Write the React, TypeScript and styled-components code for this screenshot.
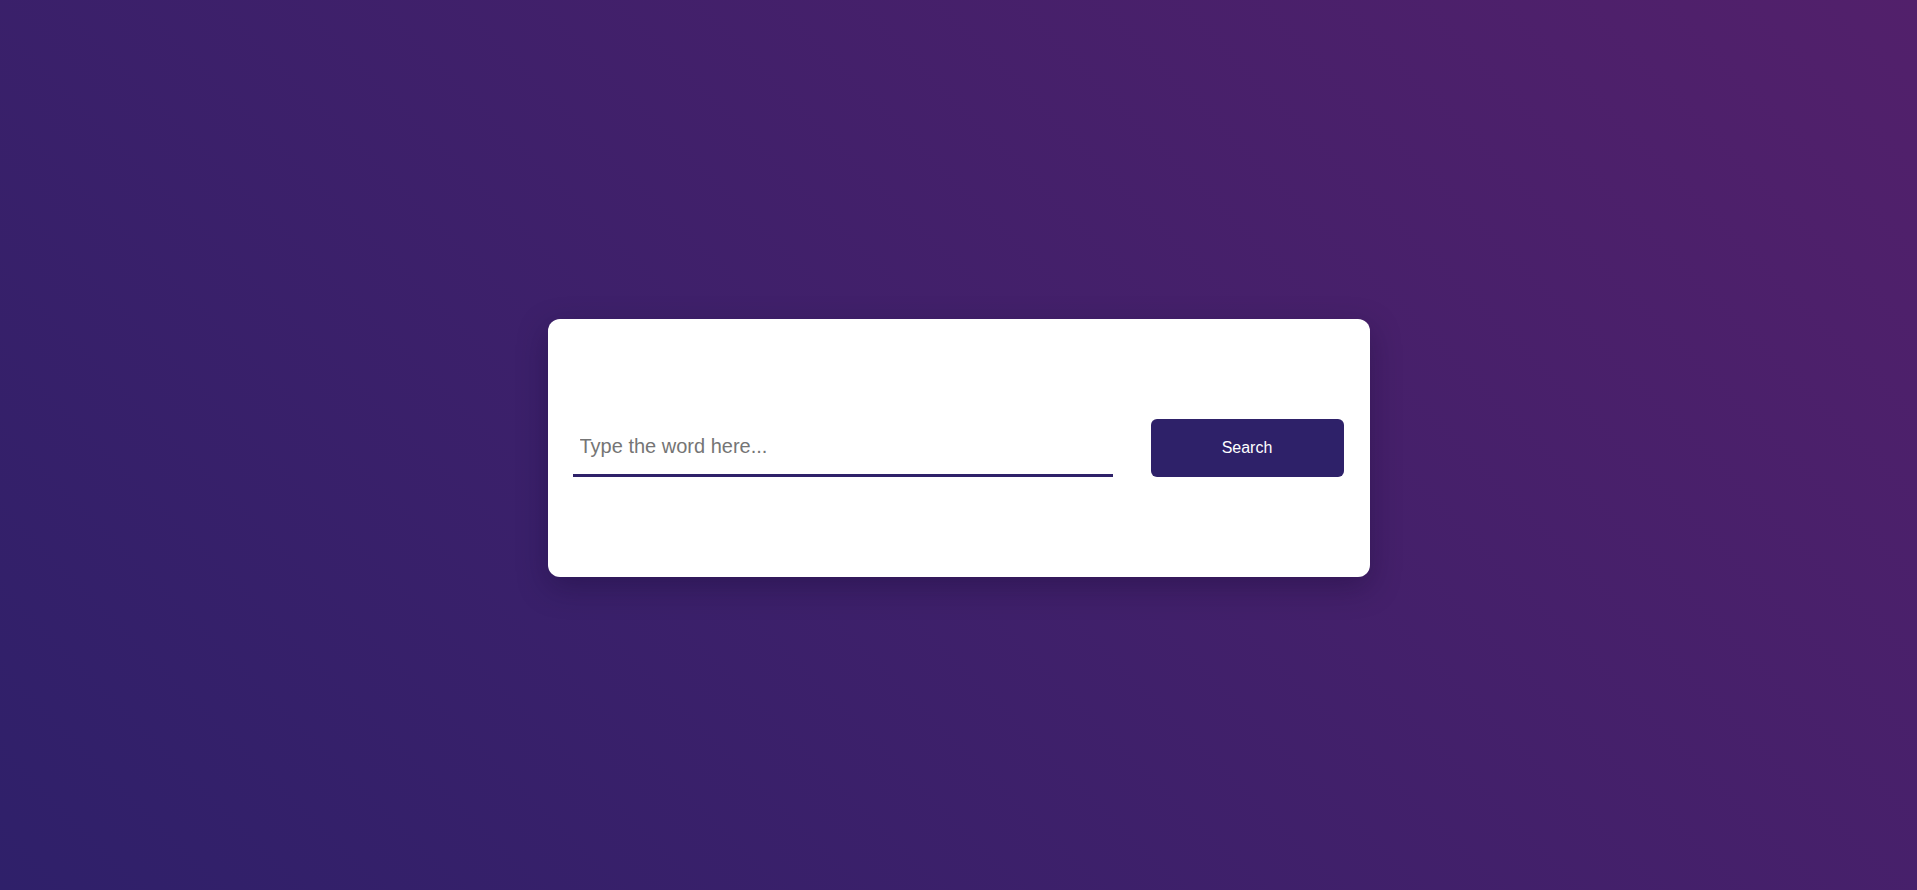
import styled, { createGlobalStyle } from "styled-components";

const GlobalStyle = createGlobalStyle`
  html, body {
    margin: 0;
    padding: 0;
    height: 100%;
  }
  body {
    font-family: "Liberation Sans", Arial, sans-serif;
  }
  #root {
    height: 100%;
  }
`;

export default function App() {
  return (
    <>
      <GlobalStyle />
      <Page>
        <Card>
          <SearchInput type="text" placeholder="Type the word here..." />
          <SearchButton>Search</SearchButton>
        </Card>
      </Page>
    </>
  );
}

const Page = styled.div`
  height: 100vh;
  box-sizing: border-box;
  padding-top: 6px;
  display: flex;
  justify-content: center;
  align-items: center;
  background: linear-gradient(45deg, #2f206a 0%, #52206b 100%);
`;

const Card = styled.div`
  width: 822px;
  height: 258px;
  box-sizing: border-box;
  padding: 0 26px 0 25px;
  background-color: #ffffff;
  border-radius: 12px;
  box-shadow: 0 10px 30px rgba(20, 10, 50, 0.35);
  display: flex;
  align-items: center;
  gap: 38px;
`;

const SearchInput = styled.input`
  width: 540px;
  height: 58px;
  box-sizing: border-box;
  padding: 0 7px;
  border: none;
  border-bottom: 3px solid #2e2169;
  outline: none;
  font-family: "Liberation Sans", Arial, sans-serif;
  font-size: 20px;
  color: #333;
  ::placeholder {
    color: #757575;
  }
`;

const SearchButton = styled.button`
  width: 193px;
  height: 58px;
  border: none;
  border-radius: 6px;
  background-color: #2e2169;
  color: #ffffff;
  font-family: "Liberation Sans", Arial, sans-serif;
  font-size: 16px;
  cursor: pointer;
`;
